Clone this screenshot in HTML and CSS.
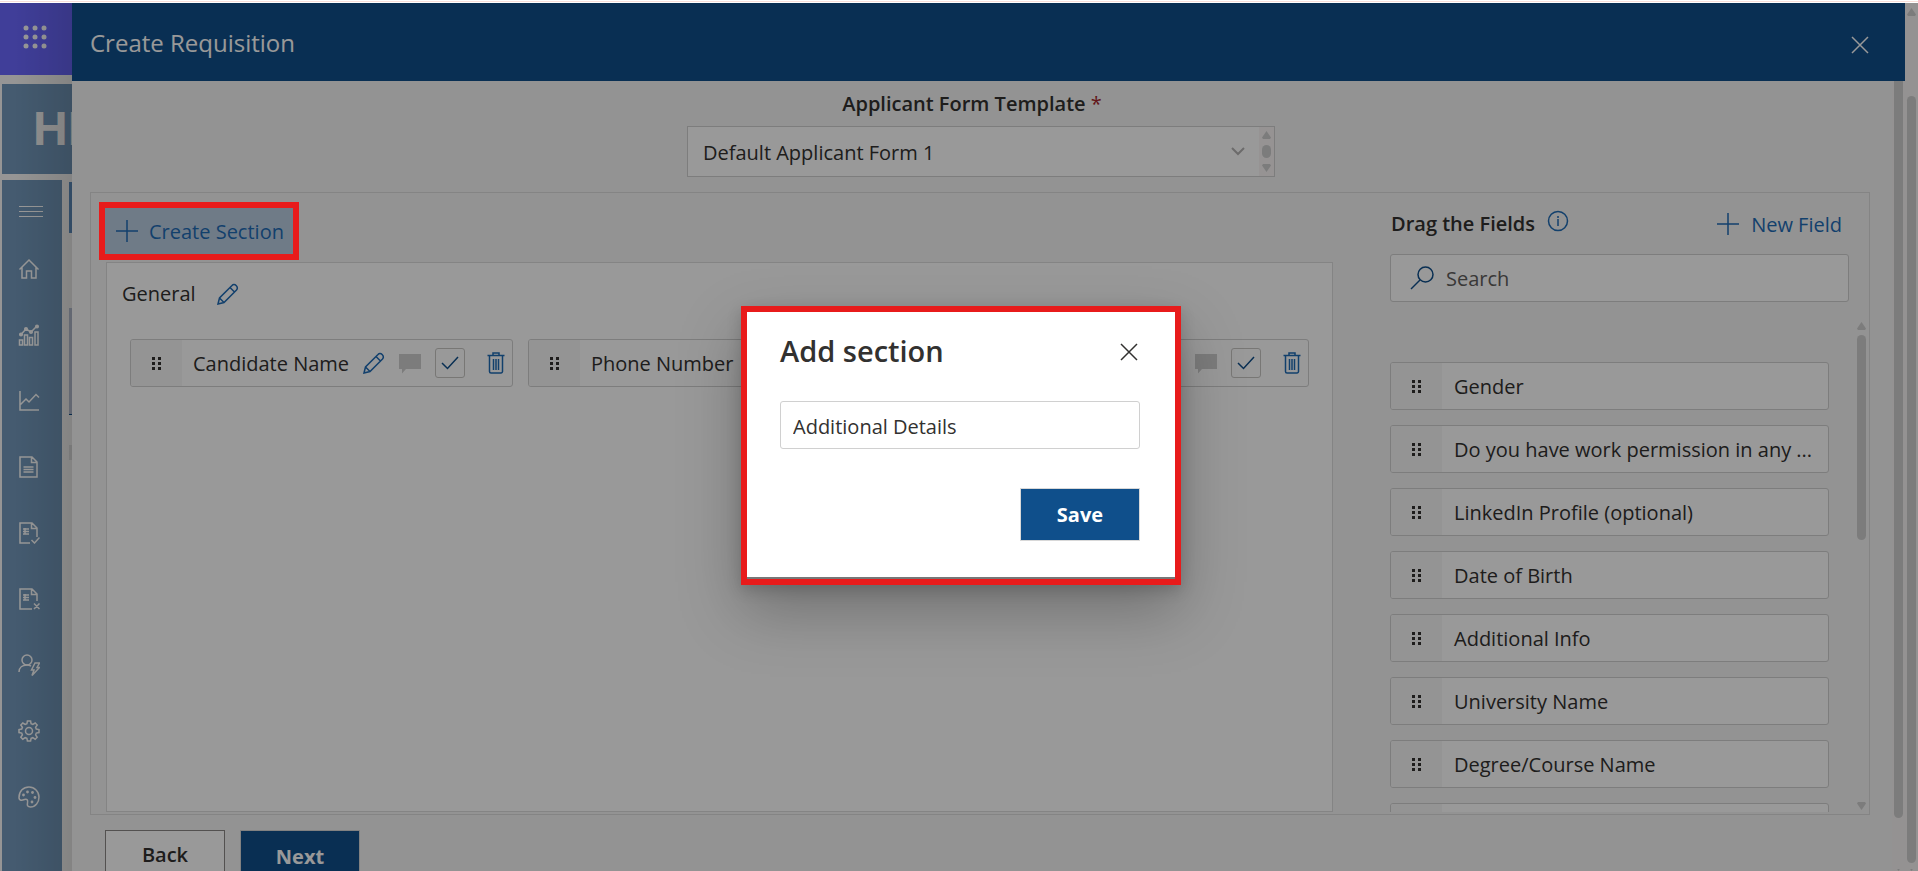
FILE: index.html
```html
<!DOCTYPE html>
<html lang="en">
<head>
<meta charset="utf-8">
<title>Create Requisition</title>
<link rel="stylesheet" href="styles.css">
</head>
<body>
<svg class="symbols" aria-hidden="true">
  <symbol id="i-pencil" viewBox="0 0 22 22"><path d="M1 21l1.500-6L15 2.500C17.500-.5 22 4 19.500 7L7 19.500zM2.500 15L7 19.500M13 4.500L17.500 9"/></symbol>
  <symbol id="i-comment" viewBox="0 0 22 20"><path d="M0 0h22v15H7l-4 4.500V15H0z"/></symbol>
  <symbol id="i-check" viewBox="0 0 18 14"><path d="M1 7l5.500 5.500L17 1"/></symbol>
  <symbol id="i-trash" viewBox="0 0 18 22"><path d="M.500 3.500h17M6 3.500V1h6v2.500M2.500 4v15.500a1.500 1.500 0 0 0 1.500 1.500h10a1.500 1.500 0 0 0 1.500-1.500V4M6.500 7v11M9 7v11M11.500 7v11"/></symbol>
  <symbol id="i-plus" viewBox="0 0 22 22"><path d="M11 0v22M0 11h22"/></symbol>
  <symbol id="i-close" viewBox="0 0 18 18"><path d="M1 1l16 16M17 1L1 17"/></symbol>
  <symbol id="i-grip" viewBox="0 0 9 13"><path d="M0 0h3v3H0zM6 0h3v3H6zM0 5h3v3H0zM6 5h3v3H6zM0 10h3v3H0zM6 10h3v3H6z"/></symbol>
  <symbol id="i-up" viewBox="0 0 9 8"><path d="M4.500 0L9 6.500 8 8H1L0 6.500z"/></symbol>
  <symbol id="i-down" viewBox="0 0 9 8"><path d="M4.500 8L9 1.500 8 0H1L0 1.500z"/></symbol>
</svg>

<div class="window">
  <div class="browser-edge"></div>
  <div class="app">
    <aside class="backdrop">
      <div class="suite-bar">
        <button class="waffle" aria-label="App launcher"><svg viewBox="0 0 24 24" width="24" height="24"><g fill="#fff"><circle cx="3" cy="3" r="2.500"/><circle cx="12" cy="3" r="2.500"/><circle cx="21" cy="3" r="2.500"/><circle cx="3" cy="12" r="2.500"/><circle cx="12" cy="12" r="2.500"/><circle cx="21" cy="12" r="2.500"/><circle cx="3" cy="21" r="2.500"/><circle cx="12" cy="21" r="2.500"/><circle cx="21" cy="21" r="2.500"/></g></svg></button>
      </div>
      <div class="banner">HR</div>
      <div class="backdrop-row">
        <nav class="rail" aria-label="Main">
          <a href="#" aria-label="Menu"><svg class="menu" viewBox="0 0 24 12"><path d="M0 .5h24M0 5.500h24M0 10.500h24"/></svg></a>
          <a href="#" aria-label="Home"><svg viewBox="0 0 22 22"><path d="M1.500 11.500L11 2l9.500 9.500M4 9.500V20h4.500v-7h5v7H18V9.500"/></svg></a>
          <a href="#" aria-label="Dashboard"><svg viewBox="0 0 22 22"><path d="M1.500 16h3v5h-3zM6.500 11h3v10h-3zM11.500 13.500h3V21h-3zM17 8h3v13h-3zM3 10.500L8 5l5 3 6-6"/><g fill="currentColor"><circle cx="3" cy="10.500" r="1.300"/><circle cx="8" cy="5" r="1.300"/><circle cx="13" cy="8" r="1.300"/><circle cx="19" cy="2.500" r="1.300"/></g></svg></a>
          <a href="#" aria-label="Analytics"><svg viewBox="0 0 22 22"><path d="M2 1v19h19M2.500 14.500L8 9l3 3 7-7.500 3 3"/></svg></a>
          <a href="#" aria-label="Documents"><svg viewBox="0 0 22 22"><path d="M2 1h12l5 5v15H2zM13.500 1v5.500H19M5.500 11h10M5.500 13.500h10M5.500 16h10"/></svg></a>
          <a href="#" aria-label="Approved"><svg viewBox="0 0 22 22"><path d="M12 21H2V1h12l5 5v9M13.500 1v5.500H19M5 7h6M5 9.500h6M5 12h6M7 6v6M13.500 18l3 3 5-5.500"/></svg></a>
          <a href="#" aria-label="Rejected"><svg viewBox="0 0 22 22"><path d="M14 21H2V1h12l5 5v7M13.500 1v5.500H19M5 7h6M5 9.500h6M5 12h6M7 6v6M16 15.500l5.500 5.500M21.500 15.500L16 21"/></svg></a>
          <a href="#" aria-label="User actions"><svg viewBox="0 0 22 22"><circle cx="9" cy="6" r="5"/><path d="M1 18c0-4.500 3.500-7 8-7 1.500 0 3 .4 4 1M17 9h4.500l-2.500 4.500h2.500L14 21.500l2-5.500h-2.500z"/></svg></a>
          <a href="#" aria-label="Settings"><svg viewBox="0 0 22 22"><path d="M9.400 1h3.200l.5 2.800 1.700.7L17.200 3l2 2-1.600 2.300.7 1.800 2.700.5v3l-2.700.5-.7 1.800 1.600 2.300-2 2-2.400-1.500-1.700.7-.5 2.600H9.400l-.5-2.600-1.700-.7L4.800 19.200l-2-2 1.600-2.300-.7-1.800L1 12.600v-3l2.700-.5.7-1.800L2.800 5l2-2 2.400 1.500 1.700-.7z"/><circle cx="11" cy="11" r="3.500"/></svg></a>
          <a href="#" aria-label="Theme"><svg viewBox="0 0 22 22"><path d="M1 11.500C1 5 5.500 1 11 1s10 4.500 10 10-3.500 10-8.500 10c-3 0-3.500-1.500-3-4 .6-3-.5-4.500-3-3.500-2.500 1-5.500 1.500-5.500-2z"/><g fill="currentColor" stroke="none"><circle cx="5.500" cy="9" r="1.400"/><circle cx="9.500" cy="6" r="1.400"/><circle cx="14.500" cy="6.500" r="1.400"/><circle cx="17" cy="11.500" r="1.400"/><circle cx="14" cy="16" r="1.400"/></g></svg></a>
        </nav>
        <div class="page-sliver"><i class="sliver-blue"></i><i class="sliver-tile"></i><i class="sliver-gray"></i></div>
      </div>
    </aside>

    <main class="drawer">
      <header class="drawer-head">
        <h1>Create Requisition</h1>
        <button class="close" aria-label="Close"><svg width="18" height="18"><use href="#i-close"/></svg></button>
      </header>
      <div class="drawer-body">
        <div class="drawer-content">
          <div class="template">
            <label for="template">Applicant Form Template <span class="required">*</span></label>
            <div class="select-box">
              <select id="template"><option>Default Applicant Form 1</option></select>
              <svg class="chevron" viewBox="0 0 14 9"><path d="M1 1l6 6 6-6"/></svg>
              <div class="mini-scroll"><svg><use href="#i-up"/></svg><i></i><svg><use href="#i-down"/></svg></div>
            </div>
          </div>

          <section class="panel">
            <div class="sections">
              <button class="create"><svg width="22" height="22"><use href="#i-plus"/></svg><span>Create Section</span></button>
              <div class="canvas">
                <h2>General <button class="icon" aria-label="Rename section"><svg width="22" height="22"><use href="#i-pencil"/></svg></button></h2>
                <div class="cards">
                  <div class="card">
                    <span class="grip"><svg width="9" height="13"><use href="#i-grip"/></svg></span>
                    <span class="name">Candidate Name</span>
                    <button class="icon" aria-label="Edit"><svg width="22" height="22"><use href="#i-pencil"/></svg></button>
                    <button class="icon comment" aria-label="Comment"><svg width="22" height="20"><use href="#i-comment"/></svg></button>
                    <label class="tick"><input type="checkbox" checked aria-label="Required"><svg width="18" height="14"><use href="#i-check"/></svg></label>
                    <button class="icon" aria-label="Delete"><svg width="18" height="22"><use href="#i-trash"/></svg></button>
                  </div>
                  <div class="card">
                    <span class="grip"><svg width="9" height="13"><use href="#i-grip"/></svg></span>
                    <span class="name">Phone Number</span>
                  </div>
                  <div class="card">
                    <span class="grip"></span>
                    <span class="name"></span>
                    <button class="icon comment" aria-label="Comment"><svg width="22" height="20"><use href="#i-comment"/></svg></button>
                    <label class="tick"><input type="checkbox" checked aria-label="Required"><svg width="18" height="14"><use href="#i-check"/></svg></label>
                    <button class="icon" aria-label="Delete"><svg width="18" height="22"><use href="#i-trash"/></svg></button>
                  </div>
                </div>
              </div>
            </div>

            <div class="fields">
              <div class="fields-head">
                <h2>Drag the Fields</h2>
                <svg class="info" viewBox="0 0 22 22"><circle cx="11" cy="11" r="9.500"/><path d="M11 9v7M11 6v2"/></svg>
                <button class="new-field"><svg width="22" height="22"><use href="#i-plus"/></svg><span>New Field</span></button>
              </div>
              <div class="search">
                <svg viewBox="0 0 24 24"><circle cx="15.500" cy="8.500" r="7.500"/><path d="M10 14L1 23"/></svg>
                <input type="text" placeholder="Search" aria-label="Search">
              </div>
              <div class="list-wrap">
                <ul class="list">
                  <li class="card"><span class="grip"><svg width="9" height="13"><use href="#i-grip"/></svg></span><span class="name">Gender</span></li>
                  <li class="card"><span class="grip"><svg width="9" height="13"><use href="#i-grip"/></svg></span><span class="name">Do you have work permission in any ...</span></li>
                  <li class="card"><span class="grip"><svg width="9" height="13"><use href="#i-grip"/></svg></span><span class="name">LinkedIn Profile (optional)</span></li>
                  <li class="card"><span class="grip"><svg width="9" height="13"><use href="#i-grip"/></svg></span><span class="name">Date of Birth</span></li>
                  <li class="card"><span class="grip"><svg width="9" height="13"><use href="#i-grip"/></svg></span><span class="name">Additional Info</span></li>
                  <li class="card"><span class="grip"><svg width="9" height="13"><use href="#i-grip"/></svg></span><span class="name">University Name</span></li>
                  <li class="card"><span class="grip"><svg width="9" height="13"><use href="#i-grip"/></svg></span><span class="name">Degree/Course Name</span></li>
                  <li class="card"><span class="grip"></span><span class="name"></span></li>
                </ul>
                <div class="scroll list-scroll"><svg><use href="#i-up"/></svg><i></i><svg><use href="#i-down"/></svg></div>
              </div>
            </div>
          </section>

          <div class="actions">
            <button class="btn back">Back</button>
            <button class="btn primary">Next</button>
          </div>
        </div>
        <div class="scroll body-scroll"><i></i><svg><use href="#i-down"/></svg></div>
      </div>
    </main>
    <div class="scroll page-scroll"><svg><use href="#i-up"/></svg><i></i><svg><use href="#i-down"/></svg></div>

    <div class="overlay">
      <div class="dialog" role="dialog" aria-labelledby="dlg">
        <div class="dialog-head">
          <h2 id="dlg">Add section</h2>
          <button class="icon dark" aria-label="Close dialog"><svg width="18" height="18"><use href="#i-close"/></svg></button>
        </div>
        <input class="text" type="text" value="Additional Details" aria-label="Section name">
        <button class="btn primary save">Save</button>
      </div>
    </div>
  </div>
</div>
</body>
</html>
```

FILE: styles.css
```css
* { box-sizing: border-box; }
body {
  margin: 0;
  overflow: hidden;
  font: 20px/28px "Segoe UI", "Open Sans", "Noto Sans", sans-serif;
  color: #323130;
}
h1, h2, ul { margin: 0; padding: 0; }
button, input, select { font: inherit; color: inherit; }
button { border: 0; padding: 0; background: none; }
svg { display: block; fill: none; stroke: currentColor; flex: none; }
.symbols { position: absolute; width: 0; height: 0; }

.window { height: 100vh; display: flex; flex-direction: column; }
.browser-edge { height: 3px; flex: none; background: linear-gradient(#fff 1px, #f9dfda 1px 2px, #fff 2px); }
.app { flex: 1; min-height: 0; display: flex; position: relative; background: #f5f5f5; }

/* page behind the drawer */
.backdrop {
  width: 72px;
  flex: none;
  overflow: hidden;
  display: flex;
  flex-direction: column;
  position: relative;
  background: #faf9f8;
}
.backdrop::after {
  content: "";
  position: absolute;
  inset: 0;
  background: linear-gradient(90deg, transparent 20%, rgba(0, 0, 0, .12));
}
.suite-bar { height: 72px; flex: none; background: #6b68ff; display: flex; align-items: center; padding: 0 0 4px 23px; }
.waffle svg { stroke: none; }
.banner {
  height: 90px;
  flex: none;
  margin: 9px 0 6px 2px;
  padding-left: 31px;
  background: #7398bb;
  color: #f3f3f3;
  font-family: "Liberation Sans", Arial, sans-serif;
  font-weight: 700;
  font-size: 48px;
  line-height: 90px;
}
.backdrop-row { flex: 1; display: flex; justify-content: space-between; }
.rail { width: 60px; margin-left: 2px; background: #7398bb; color: #fff; padding-top: 16px; }
.rail a { display: flex; justify-content: center; align-items: center; height: 66px; padding-right: 6px; color: inherit; }
.rail a:first-child { height: 32px; margin-bottom: 8px; padding-right: 2px; }
.rail svg { width: 22px; height: 22px; stroke-width: 1.5; }
.rail .menu { width: 24px; height: 12px; stroke-width: 1; }
.page-sliver { width: 3px; display: flex; flex-direction: column; }
.sliver-blue { height: 51px; margin-top: 2px; background: #5f8fc0; }
.sliver-tile { height: 107px; margin-top: 75px; background: #bcc4d8; border-bottom: 1px solid #0f4f8b; }
.sliver-gray { height: 15px; margin-top: 30px; background: #e4e4e4; }

/* drawer */
.drawer { flex: 1; min-width: 0; display: flex; flex-direction: column; }
.drawer-head {
  height: 78px;
  flex: none;
  display: flex;
  align-items: center;
  justify-content: space-between;
  padding: 0 36px 0 18px;
  background: #0f4f8b;
  color: #fff;
}
.drawer-head h1 { font-size: 24px; line-height: 34px; font-weight: 400; padding-top: 2px; }
.drawer-head .close { margin-top: 5px; }
.close svg { stroke-width: 1.5; }
.drawer-body { flex: 1; min-height: 0; display: flex; overflow: hidden; }
.drawer-content { flex: 1; min-width: 0; padding: 8px 22px 0 18px; }

.template { display: flex; flex-direction: column; align-items: center; gap: 8px; padding: 1px 0 15px 2px; }
.template label { font-weight: 600; padding-right: 18px; }
.required { color: #a4262c; font-weight: 400; }
.select-box {
  width: 588px;
  height: 51px;
  display: flex;
  align-items: center;
  border: 1px solid #d0d0d0;
  background: #fff;
}
.select-box select { flex: 1; height: 100%; border: 0; padding: 2px 15px 0; background: none; appearance: none; }
.chevron { width: 14px; height: 9px; margin-right: 14px; color: #b5b3b3; stroke-width: 2; }
.mini-scroll {
  align-self: stretch;
  width: 15px;
  display: flex;
  flex-direction: column;
  align-items: center;
  justify-content: space-between;
  padding: 4px 0;
  background: #faf6f6;
}
.mini-scroll svg, .scroll svg { width: 9px; height: 8px; fill: #cfcfcf; stroke: none; }
.mini-scroll i { width: 9px; height: 13px; border-radius: 5px; background: #cfcfcf; }

.panel {
  height: calc(100vh - 248px);
  display: flex;
  justify-content: space-between;
  gap: 57px;
  padding: 9px 1px 2px 8px;
  border: 1px solid #dcdcdc;
}
.sections { flex: 1; min-width: 0; display: flex; flex-direction: column; align-items: flex-start; }
.create, .new-field { display: flex; align-items: center; gap: 12px; color: #1f6bb5; }
.create svg, .new-field svg { stroke-width: 1.500; }
.create span, .new-field span { padding-top: 2px; }
.create {
  position: relative;
  height: 58px;
  padding: 6px 15px 6px 17px;
  margin-bottom: 2px;
  gap: 11px;
  background: #b9cee2;
}
.create::after { content: ""; position: absolute; inset: 0; z-index: 3; border: 6px solid #e81b1b; }
.canvas {
  flex: 1;
  align-self: stretch;
  margin-left: 7px;
  padding: 14px 23px;
  border: 1px solid #dcdcdc;
  background: #fff;
}
.canvas h2 { display: flex; align-items: center; gap: 21px; font-size: 20px; font-weight: 400; margin-left: -8px; height: 34px; }
.icon { color: #1f6bb5; }
.icon svg { stroke-width: 1.500; }
.cards { display: grid; grid-template-columns: repeat(3, 1fr); gap: 15px; padding-top: 28px; }
.card {
  display: flex;
  align-items: center;
  height: 48px;
  flex: none;
  overflow: hidden;
  border: 1px solid #d0d0d0;
  border-radius: 3px;
  background: #fff;
}
.grip { width: 51px; flex: none; align-self: stretch; display: grid; place-items: center; background: #f7f7f7; color: #323130; }
.grip svg { fill: currentColor; stroke: none; }
.name { flex: 1; padding: 2px 0 0 12px; white-space: nowrap; }
.cards .card { padding-right: 7px; }
.cards .name { padding-left: 11px; }
.comment { margin: 2px 14px 0; color: #cfcfcf; }
.comment svg { fill: currentColor; stroke: none; }
.tick { display: grid; place-items: center; margin-right: 22px; color: #0f4f8b; }
.tick > * { grid-area: 1 / 1; }
.tick input { width: 30px; height: 30px; margin: 0; appearance: none; border: 1px solid #c8c6c4; border-radius: 3px; }
.tick svg { stroke-width: 1.5; pointer-events: none; }

/* field list */
.fields { width: 478px; display: flex; flex-direction: column; }
.fields-head { display: flex; align-items: center; height: 44px; padding-right: 26px; }
.fields-head h2 { font-size: 20px; font-weight: 600; margin-left: 1px; }
.info { width: 22px; height: 22px; margin: 0 auto 6px 12px; color: #1f6bb5; stroke-width: 1.500; }
.search {
  display: flex;
  align-items: center;
  height: 48px;
  flex: none;
  margin: 8px 19px 15px 0;
  padding-left: 19px;
  gap: 12px;
  border: 1px solid #d0d0d0;
  border-radius: 3px;
  background: #fff;
}
.search svg { width: 24px; height: 24px; color: #0f4f8b; stroke-width: 1.500; }
.search input { flex: 1; border: 0; padding: 2px 0 0; background: none; outline: 0; }
.search input::placeholder { color: #605e5c; opacity: 1; }
.list-wrap { flex: 1; min-height: 0; display: flex; justify-content: space-between; }
.list { width: 439px; overflow: hidden; list-style: none; display: flex; flex-direction: column; gap: 15px; padding-top: 45px; }
.scroll { flex: none; display: flex; flex-direction: column; align-items: center; }
.scroll i { width: 9px; border-radius: 5px; background: #cfcfcf; }
.list-scroll { width: 13px; padding: 5px 0 2px; }
.list-scroll i { height: 205px; margin: 5px 0 auto; }
.body-scroll { width: 13px; margin-right: 0; background: #f7f3f3; }
.body-scroll i { height: calc(100% - 53px); border-radius: 0 0 5px 5px; margin-bottom: auto; }
.page-scroll { width: 13px; padding-top: 5px; background: #f7f3f3; }
.page-scroll i { flex: 1; margin: 80px 0 6px; }
.page-scroll svg:last-child { height: 2px; }
.body-scroll svg { height: 2px; }

.actions { display: flex; gap: 15px; padding: 15px 15px 0; }
.btn { width: 120px; height: 53px; border: 1px solid #d8d8d8; }
.back { background: #fff; border-color: #8a8886; font-weight: 600; padding-bottom: 3px; }
.primary { background: #0f4f8b; color: #fff; font-weight: 700; }

/* dialog */
.overlay { position: absolute; inset: 0; z-index: 2; background: rgba(0, 0, 0, .4); display: grid; place-items: center; }
.dialog {
  width: 440px;
  display: flex;
  flex-direction: column;
  padding: 20px 35px 38px 33px;
  margin: 17px 0 0 4px;
  border: 6px solid #e81b1b;
  background: #fff;
  box-shadow: inset 0 -2px #777, 0 26px 58px rgba(0, 0, 0, .26), 0 5px 14px rgba(0, 0, 0, .16);
}
.dialog-head { display: flex; align-items: center; justify-content: space-between; height: 38px; margin-bottom: 31px; padding-right: 2px; }
.dialog-head h2 { font-size: 29px; line-height: 38px; font-weight: 600; }
.dark { color: #323130; margin-top: 2px; }
.text { height: 48px; padding: 2px 12px 0; border: 1px solid #d0d0d0; border-radius: 3px; outline: 0; background: #fff; }
.save { align-self: flex-end; margin-top: 39px; }
```
